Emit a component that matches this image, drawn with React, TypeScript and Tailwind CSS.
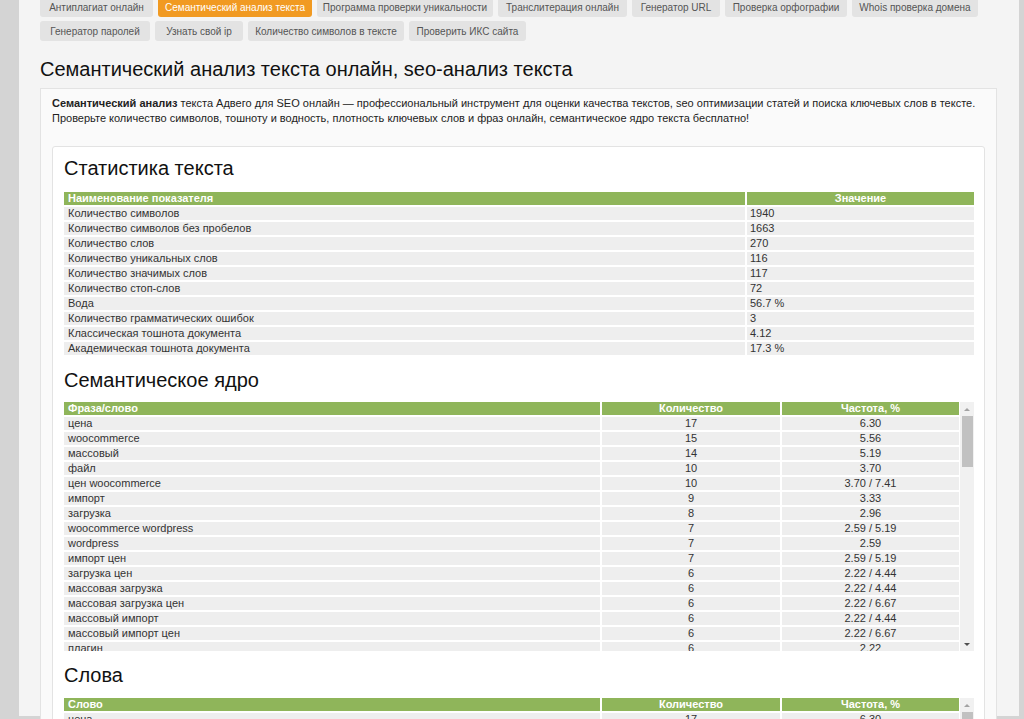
import React from "react";

const tabs: { label: string; w: string; active?: boolean }[] = [
  { label: "Антиплагиат онлайн", w: "w-[113px]" },
  { label: "Семантический анализ текста", w: "w-[154px]", active: true },
  { label: "Программа проверки уникальности", w: "w-[176px]" },
  { label: "Транслитерация онлайн", w: "w-[129px]" },
  { label: "Генератор URL", w: "w-[88px]" },
  { label: "Проверка орфографии", w: "w-[122px]" },
  { label: "Whois проверка домена", w: "w-[126px]" },
  { label: "Генератор паролей", w: "w-[110px]" },
  { label: "Узнать свой ip", w: "w-[88px]" },
  { label: "Количество символов в тексте", w: "w-[156px]" },
  { label: "Проверить ИКС сайта", w: "w-[117px]" },
];

const stats: [string, string][] = [
  ["Количество символов", "1940"],
  ["Количество символов без пробелов", "1663"],
  ["Количество слов", "270"],
  ["Количество уникальных слов", "116"],
  ["Количество значимых слов", "117"],
  ["Количество стоп-слов", "72"],
  ["Вода", "56.7 %"],
  ["Количество грамматических ошибок", "3"],
  ["Классическая тошнота документа", "4.12"],
  ["Академическая тошнота документа", "17.3 %"],
];

const core: [string, string, string][] = [
  ["цена", "17", "6.30"],
  ["woocommerce", "15", "5.56"],
  ["массовый", "14", "5.19"],
  ["файл", "10", "3.70"],
  ["цен woocommerce", "10", "3.70 / 7.41"],
  ["импорт", "9", "3.33"],
  ["загрузка", "8", "2.96"],
  ["woocommerce wordpress", "7", "2.59 / 5.19"],
  ["wordpress", "7", "2.59"],
  ["импорт цен", "7", "2.59 / 5.19"],
  ["загрузка цен", "6", "2.22 / 4.44"],
  ["массовая загрузка", "6", "2.22 / 4.44"],
  ["массовая загрузка цен", "6", "2.22 / 6.67"],
  ["массовый импорт", "6", "2.22 / 4.44"],
  ["массовый импорт цен", "6", "2.22 / 6.67"],
  ["плагин", "6", "2.22"],
  ["товар", "5", "1.85"],
  ["товаров", "5", "1.85"],
];

const words: [string, string, string][] = [
  ["цена", "17", "6.30"],
  ["woocommerce", "15", "5.56"],
  ["массовый", "14", "5.19"],
  ["файл", "10", "3.70"],
];

function Scrollbar() {
  return (
    <div className="ml-[1px] flex w-[14px] shrink-0 flex-col items-center bg-[#f1f1f1]">
      <div className="flex h-[14px] w-full items-center justify-center">
        <div className="h-0 w-0 border-x-[3px] border-b-[3px] border-x-transparent border-b-[#a3a3a3]" />
      </div>
      <div className="h-[51px] w-[11px] bg-[#c1c1c1]" />
      <div className="flex-1" />
      <div className="flex h-[14px] w-full items-center justify-center">
        <div className="h-0 w-0 border-x-[3px] border-t-[3px] border-x-transparent border-t-[#505050]" />
      </div>
    </div>
  );
}

function FreqTable({
  first,
  rows,
  height,
}: {
  first: string;
  rows: [string, string, string][];
  height: string;
}) {
  return (
    <div className={`flex ${height} overflow-hidden`}>
      <div className="flex flex-1 flex-col gap-[2px] overflow-hidden">
        <div className="grid h-[13px] shrink-0 grid-cols-[1fr_178px_177px] gap-[2px] text-[11px] font-bold leading-[13px] text-white">
          <div className="bg-[#8fb55a] pl-[4px]">{first}</div>
          <div className="bg-[#8fb55a] text-center">Количество</div>
          <div className="bg-[#8fb55a] text-center">Частота, %</div>
        </div>
        {rows.map((r, i) => (
          <div
            key={i}
            className="grid h-[13px] shrink-0 grid-cols-[1fr_178px_177px] gap-[2px] text-[11px] leading-[13px]"
          >
            <div className="bg-[#eeeeee] pl-[4px]">{r[0]}</div>
            <div className="bg-[#eeeeee] text-center">{r[1]}</div>
            <div className="bg-[#eeeeee] text-center">{r[2]}</div>
          </div>
        ))}
      </div>
      <Scrollbar />
    </div>
  );
}

export default function App() {
  return (
    <div className="h-[719px] overflow-hidden bg-[#d4d4d4] font-['Liberation_Sans',Arial,sans-serif] text-[#333]">
      <div className="ml-[19px] h-full w-[1000px] bg-[#f4f4f4] pl-[21px] pr-[22px]">
        <div className="mt-[-3px] flex flex-wrap gap-x-[5px] gap-y-[4px]">
          {tabs.map((t) => (
            <div
              key={t.label}
              className={`flex h-[20px] items-center justify-center rounded-[3px] text-[10px] ${t.w} ${
                t.active ? "bg-[#f19a22] text-white" : "bg-[#e3e3e3] text-[#555]"
              }`}
            >
              {t.label}
            </div>
          ))}
        </div>

        <h1 className="mt-[16px] text-[20px] leading-[24px] text-[#111]">
          Семантический анализ текста онлайн, seo-анализ текста
        </h1>

        <div className="mt-[7px] border border-[#e3e3e3] bg-[#fafafa] px-[11px] pt-[7px]">
          <p className="text-[11px] leading-[15px] text-[#222]">
            <span className="whitespace-nowrap">
              <b>Семантический анализ</b> текста Адвего для SEO онлайн — профессиональный инструмент для оценки
              качества текстов, seo оптимизации статей и поиска ключевых слов в тексте.
            </span>
            <br />
            <span className="whitespace-nowrap">
              Проверьте количество символов, тошноту и водность, плотность ключевых слов и фраз онлайн, семантическое
              ядро текста бесплатно!
            </span>
          </p>

          <div className="mt-[20px] rounded-[3px] border border-[#e3e3e3] bg-white pl-[11px] pr-[10px] pt-[8px]">
            <h2 className="text-[20px] leading-[26px] text-[#111]">Статистика текста</h2>
            <div className="mt-[11px] flex flex-col gap-[2px] text-[11px] leading-[13px]">
              <div className="grid grid-cols-[1fr_227px] gap-[2px] font-bold text-white">
                <div className="bg-[#8fb55a] pl-[4px]">Наименование показателя</div>
                <div className="bg-[#8fb55a] text-center">Значение</div>
              </div>
              {stats.map((s) => (
                <div key={s[0]} className="grid grid-cols-[1fr_227px] gap-[2px]">
                  <div className="bg-[#eeeeee] pl-[4px]">{s[0]}</div>
                  <div className="bg-[#eeeeee] pl-[3px]">{s[1]}</div>
                </div>
              ))}
            </div>

            <h2 className="mt-[12px] text-[20px] leading-[26px] text-[#111]">Семантическое ядро</h2>
            <div className="mt-[9px]">
              <FreqTable first="Фраза/слово" rows={core} height="h-[249px]" />
            </div>

            <h2 className="mt-[11px] text-[20px] leading-[26px] text-[#111]">Слова</h2>
            <div className="mt-[10px]">
              <FreqTable first="Слово" rows={words} height="h-[249px]" />
            </div>
          </div>
        </div>
      </div>
    </div>
  );
}
